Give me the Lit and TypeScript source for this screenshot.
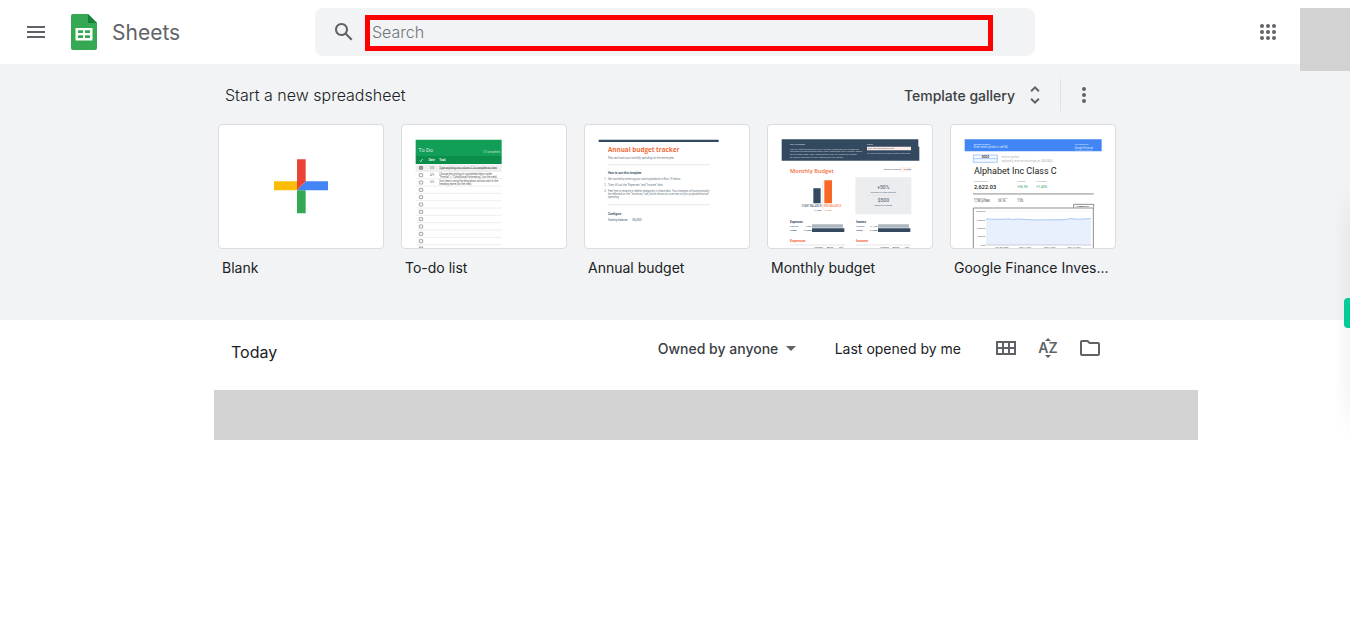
import { LitElement, html, css, svg } from "lit";
import { customElement, property } from "lit/decorators.js";

const rows = [...Array(11).keys()];

/* Thumbnails are drawn on a 492 x 369 canvas, three units to one pixel. */
const blankArt = svg`
  <path fill="#fbbc04" d="M165 169h69v27h-69z"/>
  <path fill="#34a853" d="M234 196h26v69h-26z"/>
  <path fill="#4285f4" d="M260 169h67v27h-93z"/>
  <path fill="#ea4335" d="M234 103h26v66l-26 27z"/>`;

const todoArt = svg`
  <path fill="#129e56" d="M41 44h258v50H41z"/>
  <path fill="#0c8e4b" d="M41 93h258v24H41z"/>
  <text x="49" y="82" font-size="17" fill="#d5f0e1">To Do</text>
  <text x="294" y="83" text-anchor="end" font-size="8" fill="#b9e4cd">1/3 completed</text>
  <path d="M53 107l3 3 6-8" stroke="#fff" stroke-width="2" fill="none"/>
  <text x="80" y="109" font-size="9" font-weight="700" fill="#e4f5ec">Date</text>
  <text x="112" y="109" font-size="9" font-weight="700" fill="#e4f5ec">Task</text>
  <path fill="#f0f0f0" d="M41 118h258v21H41z"/>
  ${rows.map((i) => svg`
    <path d="M41 ${139 + i * 22}h258" stroke="#e6e6e6" stroke-width="2"/>
    <rect x="52" y=${124 + i * 22} width="10" height="9" rx="1" fill=${i ? "#fff" : "#999"} stroke="#777" stroke-width="2"/>`)}
  <rect x="52" y="366" width="10" height="9" fill="#fff" stroke="#777" stroke-width="2"/>
  <text x="84" y="132" font-size="8" fill="#666">3/8</text>
  <text x="84" y="153" font-size="8" fill="#666">4/9</text>
  <text x="84" y="175" font-size="8" fill="#666">5/5</text>
  <g font-size="8" fill="#555">
    <text x="112" y="132" text-decoration="line-through">Type anything into column C to complete an item</text>
    <text x="112" y="149">Change the styling of completed items under</text>
    <text x="112" y="159">“Format” &gt; “Conditional Formatting” (on the web)</text>
    <text x="112" y="171">Sort items using the drop-down arrows next to the</text>
    <text x="112" y="180">heading name (on the web)</text>
  </g>`;

const annualArt = svg`
  <path fill="#334960" d="M41 44h360v7H41z"/>
  <text x="69" y="80" font-size="19" font-weight="700" font-family="Open Sans" fill="#f26b3a">Annual budget tracker</text>
  <path d="M67 119h309M67 239h309" stroke="#dcdcdc" stroke-width="2"/>
  <g font-size="8" fill="#6b7784">
    <text x="69" y="102">Plan and track your monthly spending for the entire year.</text>
    <text x="58" y="165">1.</text><text x="69" y="165">Get started by entering your starting balance in Row 13 below.</text>
    <text x="58" y="183">2.</text><text x="69" y="183">Then, fill out the "Expenses" and "Income" tabs.</text>
    <text x="58" y="202">3.</text><text x="69" y="202">Feel free to rename or delete categories in these tabs. Your changes will automatically</text>
    <text x="69" y="211">be reflected on the "Summary" tab, which shows an overview of your projected/actual</text>
    <text x="69" y="220">spending.</text>
  </g>
  <g font-size="9" font-weight="700" fill="#41566b">
    <text x="69" y="146">How to use this template</text>
    <text x="69" y="269">Configure</text>
  </g>
  <text x="69" y="289" font-size="8" fill="#41566b">Starting balance:</text>
  <text x="142" y="289" font-size="9" fill="#41566b">$5,000</text>`;

const monthlyArt = svg`
  <path fill="#334960" d="M41 43h410v22h3v42H41z"/>
  <g font-size="7" fill="#c7d0d9">
    <text x="66" y="61" font-weight="700">GET STARTED</text>
    <text x="66" y="74">Set your starting balance in cell L8, then customize your categories</text>
    <text x="66" y="81">and planned spending amounts in the "Expenses" and "Income" tables.</text>
    <text x="66" y="91">As you enter data in the "Transactions" tab, this sheet will update</text>
    <text x="66" y="98">to show a summary of your spending for the month.</text>
    <text x="297" y="61" font-weight="700">NOTE</text>
    <text x="297" y="88">Try not to edit cells that contain a formula.</text>
  </g>
  <path fill="#fdeeea" d="M297 65h132v11H297zM395 127h34v12h-34z"/>
  <g font-size="7" fill="#41566b">
    <text x="299" y="73">Only edit highlighted cells.</text>
    <text x="347" y="135">Starting balance:</text><text x="408" y="135">$1,000</text>
  </g>
  <text x="66" y="143" font-size="17" font-weight="600" font-family="Open Sans" fill="#f26b3a">Monthly Budget</text>
  <path fill="#334960" d="M136 190h22v45h-22z"/>
  <path fill="#f86725" d="M169 166h23v69h-23z"/>
  <path d="M164 166v90" stroke="#bbb" stroke-width="1"/>
  <g font-size="8">
    <text x="161" y="245" text-anchor="end" fill="#334960">START BALANCE</text><text x="167" y="245" fill="#f86725">END BALANCE</text>
    <text x="139" y="257" font-size="7" fill="#334960">$1,000</text><text x="170" y="257" font-size="7" fill="#f86725">$1,500</text>
  </g>
  <path fill="#ebedef" d="M262 157h168v111H262z"/>
  <path d="M296 211h100" stroke="#bbb" stroke-dasharray="2 2"/>
  <g text-anchor="middle" fill="#65727f" font-size="15" font-weight="500">
    <text x="346" y="193">+50%</text><text x="346" y="232">$500</text>
    <text x="346" y="204" font-size="7">Increase in total savings</text><text x="346" y="244" font-size="7">Saved this month</text>
  </g>
  ${[0, 198].map((dx, i) => svg`
    <g transform="translate(${dx} 0)" font-size="7" fill="#334960">
      <text x="66" y="293" font-size="9" font-weight="700">${i ? "Income" : "Expenses"}</text>
      <text x="66" y="306">Planned</text><text x="130" y="306" text-anchor="end">${i ? "$1,450" : "$950"}</text>
      <text x="66" y="318" font-weight="700">Actual</text><text x="130" y="318" text-anchor="end" font-weight="700">${i ? "$1,500" : "$1,000"}</text>
      <path fill="#adb6bf" d="M132 298h93v10h-93z"/><path d="M132 310h97v11h-97z"/>
      <text x="66" y="352" font-size="11" font-weight="700" fill="#f26b3a">${i ? "Income" : "Expenses"}</text>
      <path fill="#ccc" d="M66 359h166v2H66z"/>
      <text x="139" y="368">Planned</text><text x="176" y="368">Actual</text><text x="214" y="368">Diff.</text>
    </g>`)}`;

const financeArt = svg`
  <path fill="#4285f4" d="M41 43h411v36H41z"/>
  <g font-size="8" fill="#dbe8ff">
    <text x="68" y="61" font-size="7" font-weight="700">INSTRUCTIONS</text><text x="68" y="69">Enter stock symbol in cell B4</text>
    <text x="371" y="61" font-size="7">POWERED BY</text><text x="371" y="72" text-decoration="underline">Google Finance</text>
  </g>
  <path d="M67 90h72v22H67zM67 101h72" fill="#f4f8ff" stroke="#8ab4f8" stroke-width="2"/>
  <text x="92" y="98" font-size="8" font-weight="700" fill="#444">GOOG</text>
  <g font-size="8" fill="#b4b4b4"><text x="142" y="98">← enter a symbol</text><text x="142" y="110">← optionally, enter an exchange (ex: NASDAQ)</text></g>
  <text x="69" y="148" font-size="27" fill="#222">Alphabet Inc Class C</text>
  <g font-size="7" fill="#888">
    <text x="69" y="171">Current Price</text><text x="199" y="171">Change</text><text x="256" y="171">% Change</text>
    <text x="69" y="222">Market Cap</text><text x="141" y="222">P/E Ratio</text><text x="199" y="222">Beta</text>
  </g>
  <text x="69" y="191" font-size="17" font-weight="500" fill="#222">2,622.03</text>
  <g font-size="10" fill="#2c9c5a"><text x="199" y="190">+36.90</text><text x="256" y="190">+1.43%</text></g>
  <path fill="#bdbdbd" d="M66 204h362v5H66z"/>
  <g font-size="9" fill="#333"><text x="69" y="232">1,782,678M</text><text x="141" y="232">35.16</text><text x="199" y="232">1.00</text></g>
  <path d="M67 370V249h360v121M368 248v-10h60v10" fill="#fff" stroke="#555" stroke-width="2"/>
  <text x="374" y="246" font-size="7" font-weight="700" fill="#333">12 MONTHS</text>
  <path d="M104 258h316M104 283h316M104 308h316M104 334h316" stroke="#e8e8e8"/>
  <path fill="#e8f0fe" d="M105 282l40 1 30-1 10 2 15-2 30 2 30 1 80-1 20-3 20 2 40-2v80H105z"/>
  <path fill="none" stroke="#a9c6f8" stroke-width="3" d="M105 282l40 1 30-1 10 2 15-2 30 2 30 1 80-1 20-3 20 2 40-2"/>
  <path fill="#aaa" d="M104 359h317v2H104z"/>
  <g font-size="7" fill="#555">
    <g text-anchor="end"><text x="102" y="262">2,000.00</text><text x="102" y="287">1,500.00</text><text x="102" y="312">1,000.00</text><text x="102" y="337">500.00</text><text x="102" y="363">0.00</text></g>
    <text x="132" y="369">Jun 28, 2020</text><text x="205" y="369">Mar 7, 2021</text><text x="279" y="369">Sep 5, 2021</text><text x="350" y="369">Dec 19, 2021</text>
  </g>`;

const templates = [
  { name: "Blank", art: blankArt },
  { name: "To-do list", art: todoArt },
  { name: "Annual budget", art: annualArt },
  { name: "Monthly budget", art: monthlyArt },
  { name: "Google Finance Inves...", art: financeArt },
];

@customElement("template-card")
class TemplateCard extends LitElement {
  @property() name = "";
  @property({ attribute: false }) art: unknown;

  static styles = css`
    :host { display: block; min-width: 0; }
    .card { display: block; width: 100%; padding: 0; border: 0; background: none; text-align: left; font: inherit; color: inherit; cursor: pointer; }
    .thumb { display: block; box-sizing: border-box; border: 1px solid #dadce0; border-radius: 4px; background: #fff; overflow: hidden; }
    .art { display: block; width: 100%; height: auto; font-family: Roboto, sans-serif; }
    .name { display: block; padding: 9px 0 0 4px; font-size: 14px; line-height: 20px; overflow: hidden; text-overflow: ellipsis; white-space: nowrap; }
  `;

  render() {
    return html`<button class="card">
      <span class="thumb"><svg class="art" viewBox="0 0 492 369" aria-hidden="true">${this.art}</svg></span>
      <span class="name">${this.name}</span>
    </button>`;
  }
}

@customElement("app-root")
class AppRoot extends LitElement {
  static styles = css`
    :host { display: block; position: relative; margin-right: 16px; font-family: Inter, "Liberation Sans", sans-serif; color: #202124; }
    button { font: inherit; color: inherit; border: 0; background: none; padding: 0; cursor: pointer; }
    svg { display: block; fill: #5f6368; }
    .top { display: grid; grid-template-columns: 1fr minmax(0, 720px) 1fr; align-items: center; height: 64px; }
    .brand { display: flex; align-items: center; padding-left: 16px; }
    .icon { display: grid; place-items: center; width: 40px; height: 40px; flex: none; }
    .home { display: flex; align-items: center; gap: 14px; margin-left: 14px; color: #5f6368; font-size: 21px; text-decoration: none; }
    .search { display: flex; align-items: center; box-sizing: border-box; height: 48px; padding: 0 42px 0 9px; border-radius: 8px; background: #f1f3f4; }
    .query { flex: 1; min-width: 0; box-sizing: border-box; height: 36px; margin: 2px 0 0 1px; padding: 0 2px 2px; border: 5px solid #f00; background: none; color: #202124; font: 300 16px/24px Inter, sans-serif; outline: none; border-radius: 0; }
    .query::placeholder { color: #6f757b; opacity: 1; }
    .tools { display: flex; justify-content: flex-end; padding-right: 62px; }
    .account { position: absolute; top: 8px; right: 0; width: 50px; height: 63px; background: #d2d2d2; }
    .start { background: #f1f3f4; }
    .wrap { max-width: 930px; margin: 0 auto; }
    .start .wrap { box-sizing: border-box; height: 256px; padding: 15px 24px 0 8px; }
    .bar { display: flex; align-items: center; height: 32px; margin-bottom: 13px; }
    .title { flex: 1; margin: 0; padding-left: 7px; font-size: 16px; font-weight: 300; }
    .gallery { display: flex; align-items: center; gap: 8px; padding-right: 13px; font-size: 14px; font-weight: 500; color: #3c4043; }
    .more { display: grid; place-items: center; width: 46px; height: 32px; border-left: 1px solid #dfe1e5; margin-right: 10px; }
    .cards { display: grid; grid-template-columns: repeat(5, minmax(0, 1fr)); gap: 17px; }
    .filters { display: flex; align-items: center; height: 56px; padding-right: 30px; font-size: 14px; }
    .today { flex: 1; margin: 0; padding: 8px 0 0 21px; font-size: 16px; font-weight: 400; }
    .owner { display: flex; align-items: center; margin-right: 32px; color: #3c4043; }
    .owned { appearance: none; border: 0; padding: 0 24px 0 0; margin-right: -24px; background: none; font: inherit; font-weight: 500; color: inherit; }
    .sort { margin-right: 25px; font-weight: 400; }
    .views { display: flex; gap: 2px; }
    .file { height: 50px; margin: 14px -58px 0 4px; background: #d2d2d2; }
    .edge { position: absolute; right: 0; top: 178px; width: 16px; height: 260px; background: linear-gradient(to right, transparent, rgba(0, 0, 0, 0.04)); mask-image: linear-gradient(transparent, #000 20%, #000 80%, transparent); }
    .tab { position: absolute; right: 0; top: 298px; width: 6px; height: 30px; border-radius: 4px 0 0 4px; background: #04cb98; }
    .az { font-size: 14px; font-weight: 600; }
  `;

  render() {
    return html`
      <header class="top">
        <div class="brand">
          <button class="icon" aria-label="Main menu"><svg width="24" height="24"><path d="M3 18h18v-2H3v2zm0-5h18v-2H3v2zm0-7v2h18V6H3z"/></svg></button>
          <a class="home" href="#">
            <svg width="28" height="38" viewBox="0 0 28 38">
              <path fill="#34a853" d="M3 1h15l9 9v25a2 2 0 0 1-2 2H3a2 2 0 0 1-2-2V3a2 2 0 0 1 2-2z"/>
              <path fill="#188038" d="M18 1l9 9h-9z"/>
              <path fill="#fff" fill-rule="evenodd" d="M5.500 15h17v12.500h-17zM8 17.300v2.700h5v-2.700zM15 17.300v2.700h5v-2.700zM8 22.300v2.700h5v-2.700zM15 22.300v2.700h5v-2.700z"/>
            </svg>
            <span>Sheets</span>
          </a>
        </div>
        <form class="search" role="search">
          <button class="icon" type="button" aria-label="Search"><svg width="24" height="24"><path d="M20.490 19l-5.730-5.730C15.530 12.200 16 10.910 16 9.500 16 5.910 13.090 3 9.500 3S3 5.910 3 9.500 5.910 16 9.500 16c1.410 0 2.700-.47 3.770-1.240L19 20.490 20.490 19zM5 9.500C5 7.010 7.010 5 9.500 5S14 7.010 14 9.500 11.990 14 9.500 14 5 11.990 5 9.500z"/></svg></button>
          <input class="query" type="text" placeholder="Search" aria-label="Search" />
        </form>
        <div class="tools">
          <button class="icon" aria-label="Google apps"><svg width="24" height="24">${[6, 12, 18].map((y) => [6, 12, 18].map((x) => svg`<circle cx=${x} cy=${y} r="2"/>`))}</svg></button>
        </div>
      </header>
      <div class="account"></div>
      <section class="start">
        <div class="wrap">
          <div class="bar">
            <h2 class="title">Start a new spreadsheet</h2>
            <button class="gallery">Template gallery<svg width="24" height="24"><path d="M12 5.830L15.170 9l1.410-1.410L12 3 7.410 7.590 8.830 9 12 5.830zm0 12.340L8.830 15l-1.410 1.410L12 21l4.590-4.590L15.170 15 12 18.170z"/></svg></button>
            <button class="more" aria-label="More"><svg width="24" height="24"><circle cx="12" cy="6" r="2"/><circle cx="12" cy="12" r="2"/><circle cx="12" cy="18" r="2"/></svg></button>
          </div>
          <div class="cards">${templates.map((t) => html`<template-card .name=${t.name} .art=${t.art}></template-card>`)}</div>
        </div>
      </section>
      <main class="wrap">
        <div class="filters">
          <h2 class="today">Today</h2>
          <label class="owner">
            <select class="owned" aria-label="Owner"><option>Owned by anyone</option></select>
            <svg width="24" height="24"><path d="M7 10l5 5 5-5z"/></svg>
          </label>
          <button class="sort">Last opened by me</button>
          <div class="views">
            <button class="icon" aria-label="Grid view"><svg width="24" height="24"><path fill-rule="evenodd" d="M2 5h20v14H2zM4 7v4h4V7zM10 7v4h4V7zM16 7v4h4V7zM4 13v4h4v-4zM10 13v4h4v-4zM16 13v4h4v-4z"/></svg></button>
            <button class="icon" aria-label="Sort options"><svg width="24" height="24"><path d="M9 5l3-3 3 3zM9 19l3 3 3-3z"/><text class="az" x="12" y="17" text-anchor="middle">AZ</text></svg></button>
            <button class="icon" aria-label="Open file picker"><svg width="24" height="24"><path d="M9.170 6l2 2H20v10H4V6h5.170M10 4H4c-1.100 0-1.990.9-1.990 2L2 18c0 1.100.9 2 2 2h16c1.100 0 2-.9 2-2V8c0-1.100-.9-2-2-2h-8l-2-2z"/></svg></button>
          </div>
        </div>
        <div class="file"></div>
      </main>
      <div class="edge"></div>
      <div class="tab"></div>
    `;
  }
}
